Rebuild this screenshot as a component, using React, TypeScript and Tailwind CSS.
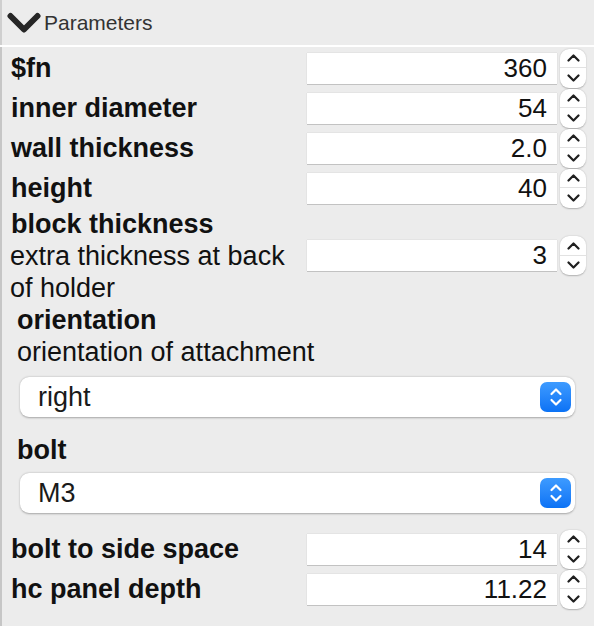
import React from 'react';

const font = { fontFamily: '"Liberation Sans", Arial, sans-serif' };

const Stepper = () => (
  <div className="flex h-[39px] w-[26px] flex-col items-center rounded-[9px] bg-white shadow-[0_0.5px_1.5px_rgba(0,0,0,0.25)]">
    <div className="flex h-1/2 w-full items-center justify-center border-b border-[#e2e2e2] pt-[1px]">
      <svg width="13" height="8" viewBox="0 0 13 8" fill="none">
        <path d="M1.5 6.5 L6.5 1.5 L11.5 6.5" stroke="#1f1f1f" strokeWidth="2.2" strokeLinecap="round" strokeLinejoin="round" />
      </svg>
    </div>
    <div className="flex h-1/2 w-full items-center justify-center">
      <svg width="13" height="8" viewBox="0 0 13 8" fill="none">
        <path d="M1.5 1.5 L6.5 6.5 L11.5 1.5" stroke="#1f1f1f" strokeWidth="2.2" strokeLinecap="round" strokeLinejoin="round" />
      </svg>
    </div>
  </div>
);

const NumberField = ({ value }: { value: string }) => (
  <div className="flex items-center gap-[3px]">
    <div className="flex h-[31px] w-[250px] items-center justify-end bg-white pr-[10px] text-[26px] text-[#111] shadow-[0_1px_0_#c2c2c2,0_-0.5px_0_#dcdcdc,-0.5px_0_0_#dcdcdc,0.5px_0_0_#dcdcdc]">
      {value}
    </div>
    <Stepper />
  </div>
);

const Row = ({ label, value }: { label: string; value: string }) => (
  <div className="flex h-[40px] items-center justify-between pl-[9px] pr-[8px]">
    <span className="text-[27px] font-bold text-[#111]">{label}</span>
    <NumberField value={value} />
  </div>
);

const SelectBox = ({ value }: { value: string }) => (
  <div className="ml-[18px] mr-[19px] flex h-[40px] items-center justify-between rounded-[9px] bg-white pl-[18px] pr-[4px] shadow-[0_0.5px_2px_rgba(0,0,0,0.3)]">
    <span className="text-[27px] text-[#1a1a1a]">{value}</span>
    <div className="flex h-[30px] w-[31px] items-center justify-center rounded-[7px] bg-gradient-to-b from-[#3d9bff] to-[#0a72f5]">
      <svg width="14" height="22" viewBox="0 0 14 22" fill="none">
        <path d="M2.5 8 L7 3.5 L11.5 8" stroke="white" strokeWidth="2.2" strokeLinecap="round" strokeLinejoin="round" />
        <path d="M2.5 14 L7 18.5 L11.5 14" stroke="white" strokeWidth="2.2" strokeLinecap="round" strokeLinejoin="round" />
      </svg>
    </div>
  </div>
);

export default function App() {
  return (
    <div className="h-[626px] w-[594px] overflow-hidden bg-[#ececec]" style={font}>
      <div className="flex h-[45px] items-center border-l-2 border-[#cfcfcf] pl-[5px]">
        <svg width="35" height="24" viewBox="0 0 35 24" fill="none">
          <path d="M3.5 5 L17 18.5 L30.5 5" stroke="#262626" strokeWidth="6" strokeLinecap="round" strokeLinejoin="round" />
        </svg>
        <span className="ml-[2px] text-[21px] text-[#333]">Parameters</span>
      </div>
      <div className="h-[2px] bg-white" />
      <div className="flex flex-col border-l-2 border-[#c6c6c6] pt-[1px]">
        <Row label="$fn" value="360" />
        <Row label="inner diameter" value="54" />
        <Row label="wall thickness" value="2.0" />
        <Row label="height" value="40" />

        <div className="mt-[2px] pl-[9px] text-[27px] font-bold leading-[28px] text-[#111]">block thickness</div>
        <div className="mt-[2px] flex items-start justify-between pl-[8px] pr-[8px]">
          <span className="w-[292px] text-[27px] leading-[32px] text-[#111]">extra thickness at back of holder</span>
          <div className="-mt-[4px]">
            <NumberField value="3" />
          </div>
        </div>

        <div className="mt-[1px] pl-[15px] text-[27px] font-bold leading-[30px] text-[#111]">orientation</div>
        <div className="mt-[1px] pl-[15px] text-[27px] leading-[32px] text-[#111]">orientation of attachment</div>
        <div className="mt-[9px]">
          <SelectBox value="right" />
        </div>

        <div className="mt-[18px] pl-[15px] text-[27px] font-bold leading-[30px] text-[#111]">bolt</div>
        <div className="mt-[8px]">
          <SelectBox value="M3" />
        </div>

        <div className="mt-[16px]">
          <Row label="bolt to side space" value="14" />
          <Row label="hc panel depth" value="11.22" />
        </div>
        <div className="h-[40px]" />
      </div>
    </div>
  );
}
